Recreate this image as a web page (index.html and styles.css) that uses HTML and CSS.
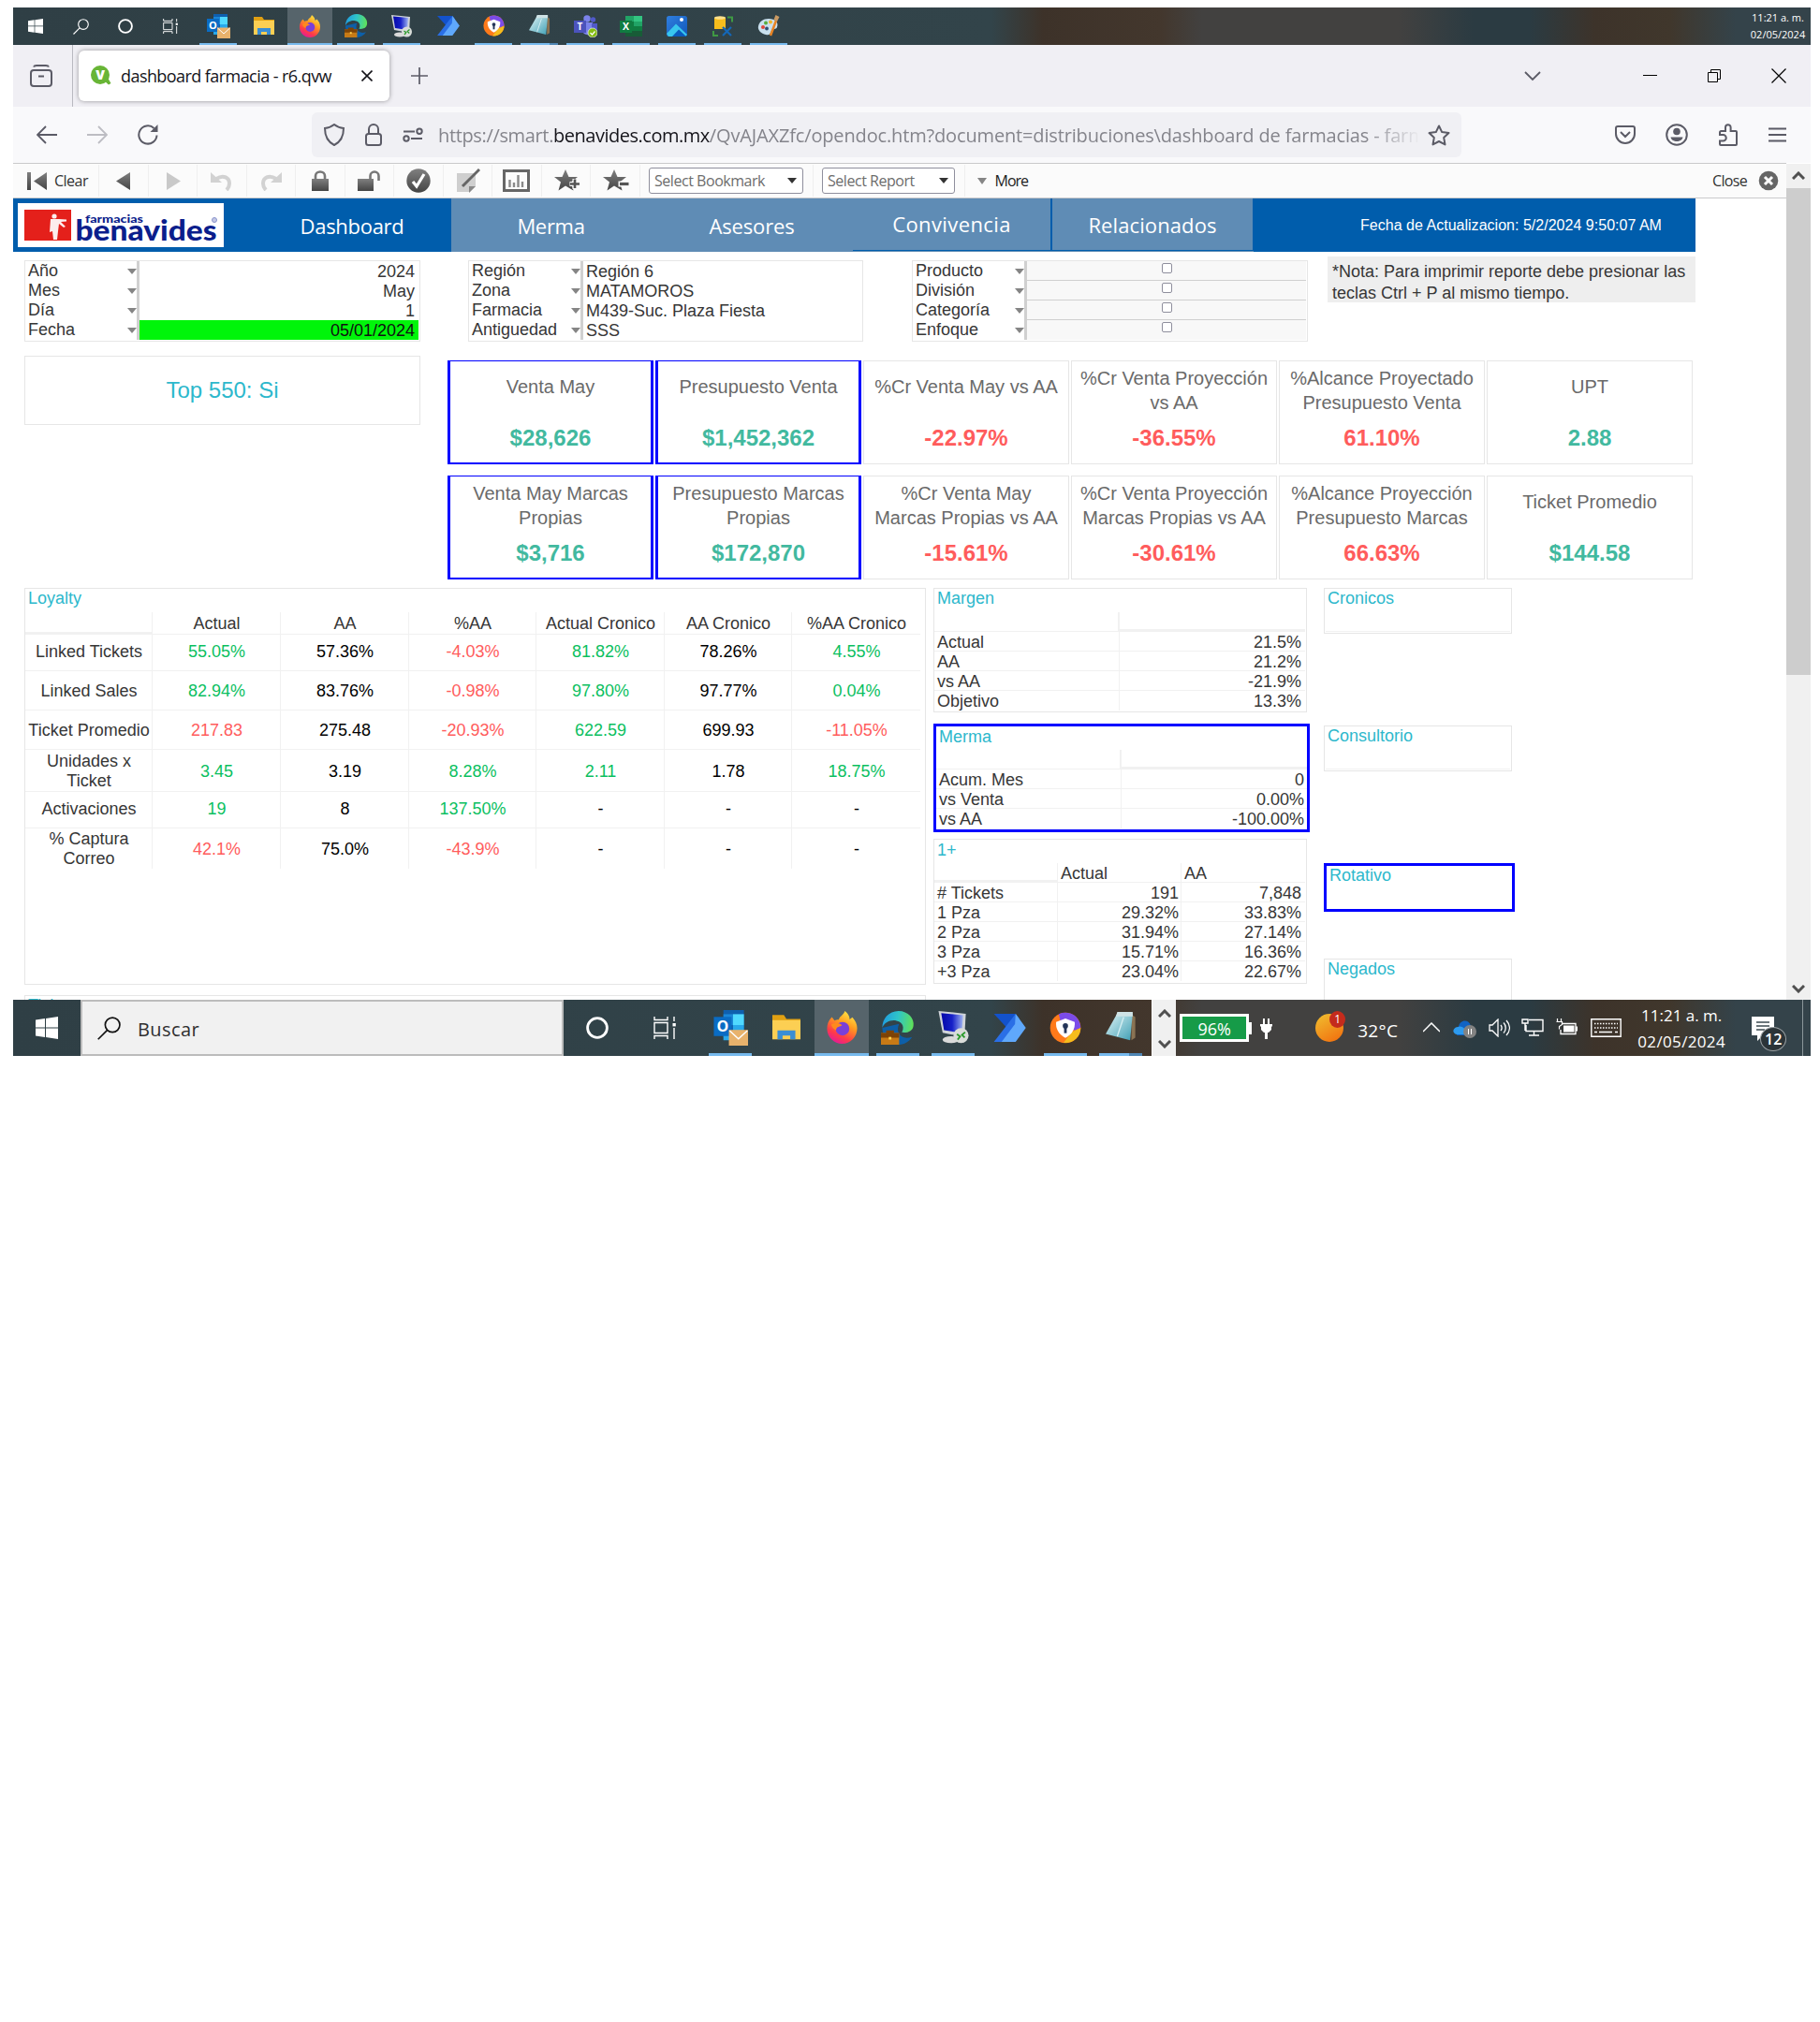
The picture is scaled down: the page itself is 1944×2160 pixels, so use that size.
FILE: index.html
```html
<!DOCTYPE html>
<html lang="es">
<head>
<meta charset="utf-8">
<title>dashboard farmacia - r6.qvw</title>
<link rel="stylesheet" href="styles.css">
</head>
<body>
<svg class="sprite" width="0" height="0" aria-hidden="true">
  <defs>
    <linearGradient id="ff" x1="0.8" y1="0" x2="0.3" y2="1"><stop offset="0" stop-color="#fff04a"/><stop offset=".4" stop-color="#ff9a1f"/><stop offset=".75" stop-color="#ff3b47"/><stop offset="1" stop-color="#e3189c"/></linearGradient>
    <linearGradient id="edge" x1="0" y1="0.3" x2="1" y2="0.4"><stop offset="0" stop-color="#1f9be0"/><stop offset=".5" stop-color="#2fc5c8"/><stop offset="1" stop-color="#5fe05a"/></linearGradient>
    <linearGradient id="scr" x1="0" y1="0" x2="1" y2="0"><stop offset="0" stop-color="#0508a8"/><stop offset=".5" stop-color="#1620c8"/><stop offset="1" stop-color="#9fb4f0"/></linearGradient>
    <linearGradient id="note" x1="0" y1="0" x2="1" y2="1"><stop offset="0" stop-color="#e2f5f7"/><stop offset="1" stop-color="#3f9fb4"/></linearGradient>
    <linearGradient id="gray" x1="0" y1="0" x2="0" y2="1"><stop offset="0" stop-color="#808080"/><stop offset="1" stop-color="#444"/></linearGradient>
    <linearGradient id="photo" x1="0" y1="0" x2="1" y2="1"><stop offset="0" stop-color="#2f7fe0"/><stop offset="1" stop-color="#1257b8"/></linearGradient>
  </defs>
  <symbol id="i-win" viewBox="0 0 24 24"><path fill="#fff" d="M0 3.4 10 2v9.4H0zM11 1.9 24 0v11.4H11zM0 12.5h10V22L0 20.6zM11 12.5h13V24l-13-1.9z"/></symbol>
  <symbol id="i-search" viewBox="0 0 24 24"><g fill="none" stroke="currentColor" stroke-width="1.6"><circle cx="15.5" cy="8.5" r="7.5"/><path d="M10 14 .7 23.3"/></g></symbol>
  <symbol id="i-circle" viewBox="0 0 24 24"><circle cx="12" cy="12" r="10.4" fill="none" stroke="#fff" stroke-width="2.8"/></symbol>
  <symbol id="i-task" viewBox="0 0 24 24"><g fill="none" stroke="#fff" stroke-width="1.4"><path d="M1 6.5h14v11H1zM1 0v3.5h14V0M1 24v-3.5h14V24M22 0v5M22 12v12"/></g><path fill="#fff" d="M20.5 7h3.3v3.4h-3.3z"/></symbol>
  <symbol id="i-outlook" viewBox="0 0 26 26"><path fill="#0f5fae" d="M8 0h15v20H8z"/><path fill="#1a86d8" d="M8 3h7v8H8z"/><path fill="#50d9ff" d="M15 3h8v8h-8z"/><path fill="#28a8ea" d="M8 17h15v5H8zM15 11h8v6h-8z"/><path fill="#0a6cc4" d="M1 5h13v14H1z"/><text x="7.5" y="16" text-anchor="middle" font-family="Open Sans, sans-serif" font-weight="700" font-size="11" fill="#fff">O</text><path fill="#e8b26c" d="M12 14.5h14V26H12z"/><path d="m12.5 15 6.5 6 6.5-6" fill="none" stroke="#fff"/></symbol>
  <symbol id="i-folder" viewBox="0 0 24 22"><path fill="#e0a012" d="M1 1h9l2 3h11v6H1z"/><path fill="#fccf53" d="M1 5h22v15H1z"/><path fill="#3a8ed4" d="M5 20v-7h14v7h-4v-3H9v3z"/></symbol>
  <symbol id="i-ff" viewBox="0 0 24 24"><path fill="url(#ff)" d="M4.5 4.5 6.500 7c1-.6 1.500-.7 3-.7 1-3 3.500-3 4.500-6.300 3 2.200 3.500 4.700 3.500 6.100l2-1.500c2.200 2.500 3.500 5 3.500 8.100C23 19 18 24 12 24S1 19 1 13c0-3.200 1-6 3.500-8.500z"/><circle cx="12.300" cy="13" r="5" fill="#7a3fd8"/><path fill="#ff8a1c" d="M4 10c3-2 5-1.500 8 .3-1.500 1.500-4 .7-4.500 3.700-1.500-.5-3-2-3.500-4z"/></symbol>
  <symbol id="i-edge" viewBox="0 0 26 26"><path fill="#0d5fa8" d="M24 20c-2.500 4-6.500 6-11 6C6 26 1 20 1 13l13-3c-3 6 1 13 10 10z"/><path fill="url(#edge)" d="M1 13C1 6 6 0 13.500 0S26 6 25 11.500c-.7 4-4 5.500-9 5 2-3 1.500-8-4-9C7 6.500 2.500 9 1 13z"/><path fill="#c77a16" d="M0 17h14v9H0z"/><path fill="#7d4306" d="M0 17h14v3.500H0zM4 15h6v2H4z"/><path fill="#ffd34d" d="M6 20h2v2H6z"/></symbol>
  <symbol id="i-remote" viewBox="0 0 24 24"><path fill="#cfd3d8" d="m1 0 20 2-1 17L4 16z"/><path fill="url(#scr)" d="m3 1.500 16 1.600-1 13L5 14z"/><ellipse cx="10" cy="21" rx="6" ry="2.500" fill="#dadada"/><circle cx="17.500" cy="18" r="5.500" fill="#d9dcd9"/><path d="m14.500 17 2.300 1.700-1.800 2.300M20.500 15.500l-2.300 2 2 2" fill="none" stroke="#2b9a2b" stroke-width="1.300"/></symbol>
  <symbol id="i-flow" viewBox="0 0 26 22"><path fill="#1352cc" d="M1 0h17l-6 12z"/><path fill="#2a6fe6" d="M1 22 18 0l3 4L9 22z"/><path fill="#5fa8fb" d="m18 0 8 11-8 11H7L17.500 8z"/></symbol>
  <symbol id="i-avast" viewBox="0 0 24 24"><circle cx="12" cy="12" r="11.500" fill="#ff7a1a"/><path fill="#7b4be8" d="M7 1.500C14-1.500 23 2 23.500 12L19 14 8 6z"/><path fill="#f5bd1c" d="M23.500 12c0 7-6 12-13 11.300L17 15z"/><path fill="#fff" d="m12 5 7 2.500c.5 5-2 9.500-7 12-5-2.500-7.500-7-7-12z"/><circle cx="12" cy="10.500" r="2" fill="#25365a"/><path fill="#25365a" d="M11 11h2v5h-2z"/></symbol>
  <symbol id="i-notepad" viewBox="0 0 24 24"><path fill="#8a7353" d="m20 2 3 2v16l-3 2z"/><path fill="url(#note)" d="M9 1h12l-2 21L0 17z"/><path fill="#cfe3e6" d="M9 0h12v3.500H8z"/><path d="M14 4 9 19" stroke="#d5eef2" stroke-width="1"/></symbol>
  <symbol id="i-teams" viewBox="0 0 26 24"><circle cx="15" cy="4" r="3.700" fill="#7b83eb"/><circle cx="21.500" cy="5" r="2.700" fill="#5059c9"/><path fill="#7b83eb" d="M10 8h11v11c-5 4-10 2-11-2z"/><path fill="#5059c9" d="M20 9h6v8c-1 3-5 3-6 1z"/><path fill="#4b53bc" d="M1 6h13v13H1z"/><text x="7.500" y="16" text-anchor="middle" font-family="Open Sans, sans-serif" font-weight="700" font-size="10" fill="#fff">T</text><circle cx="21" cy="19" r="5" fill="#84bd12" stroke="#eee" stroke-width=".7"/><path d="m18.500 19 2 2 3-3.500" fill="none" stroke="#fff" stroke-width="1.200"/></symbol>
  <symbol id="i-excel" viewBox="0 0 24 22"><path fill="#21a366" d="M6 0h18v22H6z"/><path fill="#33c481" d="M15 0h9v6h-9z"/><path fill="#185c37" d="M6 16h18v6H6z"/><path fill="#107c41" d="M6 6h9v10H6zM0 5h13v13H0zM15 11h9v5h-9z"/><text x="6.500" y="15.300" text-anchor="middle" font-family="Open Sans, sans-serif" font-weight="700" font-size="10.500" fill="#fff">X</text></symbol>
  <symbol id="i-photos" viewBox="0 0 22 22"><rect width="22" height="22" rx="2.500" fill="url(#photo)"/><path fill="#38c6ee" d="M0 19 10 8.500 22 20l-2 2H2z"/><path fill="#0a5bbd" d="m6 22 7-7.500 8 7.500z"/><circle cx="16" cy="4" r="2" fill="#fff"/></symbol>
  <symbol id="i-db" viewBox="0 0 22 22"><path fill="#f7bd1c" d="M2 2h12v12H2z"/><ellipse cx="8" cy="2" rx="6" ry="1.800" fill="#ffe08a"/><path d="M16 1.500h5v5M1 16v5h5" fill="none" stroke="#3f9a43" stroke-width="2"/><path d="m11 12 9 9M20 12l-9 9" stroke="#1467b8" stroke-width="2.200"/></symbol>
  <symbol id="i-paint" viewBox="0 0 24 24"><path fill="#c9e0ee" d="M12 4c7 0 11 4 9 9-1 3-5 1-6 4s-2 5-6 4C4 20 0 16 1 12c1-5 5-8 11-8z"/><circle cx="6" cy="13" r="2" fill="#e0453a"/><circle cx="9" cy="8.500" r="2" fill="#58ad3e"/><circle cx="14" cy="7.500" r="2" fill="#f0b42c"/><circle cx="10" cy="14.500" r="1.900" fill="#2f4f74"/><path d="m14 22 6-16" stroke="#e88424" stroke-width="2.500"/><path fill="#c99a63" d="m17.500 5 2-5 4 2-2.500 5z"/></symbol>
</svg>

<div class="screen">
  <div class="bar bar-top">
    <div class="start-cells">
      <span><svg width="16" height="16"><use href="#i-win"/></svg></span>
      <span><svg width="17" height="17"><use href="#i-search"/></svg></span>
      <span><svg width="16" height="16"><use href="#i-circle"/></svg></span>
      <span><svg width="16" height="16"><use href="#i-task"/></svg></span>
    </div>
    <div class="apps">
      <span class="on"><svg width="26" height="26"><use href="#i-outlook"/></svg></span>
      <span><svg width="24" height="22"><use href="#i-folder"/></svg></span>
      <span class="on focus"><svg width="24" height="24"><use href="#i-ff"/></svg></span>
      <span class="on"><svg width="25" height="25"><use href="#i-edge"/></svg></span>
      <span class="on"><svg width="24" height="24"><use href="#i-remote"/></svg></span>
      <span><svg width="25" height="21"><use href="#i-flow"/></svg></span>
      <span class="on"><svg width="23" height="23"><use href="#i-avast"/></svg></span>
      <span class="on multi"><svg width="23" height="23"><use href="#i-notepad"/></svg></span>
      <span class="on"><svg width="26" height="24"><use href="#i-teams"/></svg></span>
      <span class="on"><svg width="24" height="22"><use href="#i-excel"/></svg></span>
      <span class="on"><svg width="22" height="22"><use href="#i-photos"/></svg></span>
      <span class="on"><svg width="22" height="22"><use href="#i-db"/></svg></span>
      <span class="on"><svg width="24" height="24"><use href="#i-paint"/></svg></span>
    </div>
    <div class="mini-clock"><div>11:21 a. m.</div><div>02/05/2024</div></div>
  </div>

  <div class="tabs">
    <div class="fxview"><svg width="24" height="24" viewBox="0 0 24 24" fill="none" stroke="#5b5b66" stroke-width="2"><rect x="1" y="6" width="22" height="17" rx="3"/><path d="M4 2.500C4.500 1 5.500 1 7 1h10c1.500 0 2.500 0 3 1.500M9 12.500h6"/></svg></div>
    <div class="tab">
      <svg width="22" height="22" viewBox="0 0 22 22"><circle cx="10" cy="10" r="10" fill="#68b536"/><path fill="#68b536" d="m14 16 4-3 3.500 6-2.500 1.500z"/><text x="10" y="15" text-anchor="middle" font-family="Open Sans, sans-serif" font-weight="800" font-size="14" fill="#fff">V</text></svg>
      <span class="tab-title">dashboard farmacia - r6.qvw</span>
      <svg width="12" height="12" viewBox="0 0 12 12" stroke="#15141a" stroke-width="1.600"><path d="m.5.5 11 11M11.500.5l-11 11"/></svg>
    </div>
    <svg class="plus" width="18" height="18" viewBox="0 0 18 18" stroke="#5b5b66" stroke-width="1.700"><path d="M9 0v18M0 9h18"/></svg>
    <svg class="t-chev" width="18" height="11" viewBox="0 0 18 11" fill="none" stroke="#5b5b66" stroke-width="1.800"><path d="m1 1 8 8 8-8"/></svg>
    <svg class="t-min" width="15" height="16" viewBox="0 0 15 16" stroke="#000"><path d="M0 7.500h15"/></svg>
    <svg class="t-max" width="14" height="14" viewBox="0 0 14 14" fill="none" stroke="#000"><path d="M.5 3.500h10v10H.5zM3.500 3V.5h10v10H11"/></svg>
    <svg class="t-close" width="16" height="16" viewBox="0 0 16 16" stroke="#000" stroke-width="1.200"><path d="m.5.5 15 15M15.500.5l-15 15"/></svg>
  </div>

  <div class="nav">
    <svg class="n-back" width="22" height="20" viewBox="0 0 22 20" fill="none" stroke="#5b5b66" stroke-width="1.800"><path d="M22 10H1M10 1l-9 9 9 9"/></svg>
    <svg class="n-fwd" width="22" height="20" viewBox="0 0 22 20" fill="none" stroke="#bdbdc3" stroke-width="1.800"><path d="M0 10h21M12 1l9 9-9 9"/></svg>
    <svg class="n-rel" width="22" height="22" viewBox="0 0 22 22"><path d="M20.500 11.500A9.600 9.600 0 1 1 17.500 4" fill="none" stroke="#5b5b66" stroke-width="2"/><path fill="#5b5b66" d="M21.500 0v8h-8z"/></svg>
    <div class="url">
      <svg width="22" height="24" viewBox="0 0 22 24" fill="none" stroke="#5b5b66" stroke-width="2"><path d="M11 1c3 2.500 6 3.500 10 4 0 8-2 14-10 18C3 19 1 13 1 5c4-.5 7-1.500 10-4z"/></svg>
      <svg class="u-lock" width="18" height="24" viewBox="0 0 18 24" fill="none" stroke="#5b5b66" stroke-width="2"><rect x="1" y="11" width="16" height="12" rx="2.500"/><path d="M4 11V6a5 5 0 0 1 10 0v5"/></svg>
      <svg class="u-perm" width="22" height="16" viewBox="0 0 22 16" fill="none" stroke="#5b5b66" stroke-width="2"><path d="M1 4.500h12M9 12h12"/><circle cx="18" cy="4.300" r="2.700"/><circle cx="4" cy="12" r="2.700"/></svg>
      <div class="u-text"><span class="scheme">https://smart.</span><span class="host">benavides.com.mx</span><span class="path">/QvAJAXZfc/opendoc.htm?document=distribuciones\dashboard de farmacias - farm</span></div>
      <svg class="u-star" width="24" height="23" viewBox="0 0 24 23" fill="none" stroke="#5b5b66" stroke-width="2" stroke-linejoin="round"><path d="m12 1.500 3.200 6.600 7.300 1-5.300 5 1.300 7.300L12 18l-6.500 3.400 1.300-7.300-5.300-5 7.300-1z"/></svg>
    </div>
    <svg class="n-pocket" width="22" height="20" viewBox="0 0 22 20" fill="none" stroke="#5b5b66" stroke-width="2"><path d="M1 3a2 2 0 0 1 2-2h16a2 2 0 0 1 2 2v6a10 10 0 0 1-20 0zM6 7l5 5 5-5"/></svg>
    <svg class="n-acc" width="24" height="24" viewBox="0 0 24 24"><circle cx="12" cy="12" r="10.800" fill="none" stroke="#5b5b66" stroke-width="2"/><circle cx="12" cy="8.500" r="3.800" fill="#5b5b66"/><path fill="#5b5b66" d="M5.500 14.500h13C18 17.500 15 19 12 19s-6-1.500-6.500-4.500z"/></svg>
    <svg class="n-ext" width="21" height="24" viewBox="0 0 21 24" fill="none" stroke="#5b5b66" stroke-width="2"><path d="M2 12V9.500A1.500 1.500 0 0 1 3.500 8H8V4a2.800 2.800 0 0 1 5.600 0v4h5.400a1 1 0 0 1 1 1v13a1 1 0 0 1-1 1H3a1 1 0 0 1-1-1v-3.500h3.500a2.800 2.800 0 0 0 0-6.500z"/></svg>
    <svg class="n-menu" width="19" height="16" viewBox="0 0 19 16" stroke="#5b5b66" stroke-width="1.800"><path d="M0 1.500h19M0 8h19M0 14.500h19"/></svg>
  </div>

  <div class="view">
    <div class="doc">
      <div class="toolbar">
        <span class="tc first"><svg width="22" height="19" viewBox="0 0 22 19" fill="url(#gray)"><path d="M1 0h4v19H1zM22 0v19L8 9.500z"/></svg><span>Clear</span></span>
        <span class="tc"><svg width="15" height="19" viewBox="0 0 15 19"><path fill="url(#gray)" d="M15 0v19L0 9.500z"/></svg></span>
        <span class="tc"><svg class="nudge" width="15" height="19" viewBox="0 0 15 19"><path fill="#c9c9c9" d="M0 0v19l15-9.500z"/></svg></span>
        <span class="tc"><svg width="23" height="21" viewBox="0 0 23 21"><path d="M6 8c8-5 14-1 14 5 0 3-1 5-3 7" fill="none" stroke="#d2d2d2" stroke-width="4"/><path fill="#d2d2d2" d="M0 1v11h12z"/></svg></span>
        <span class="tc"><svg width="23" height="21" viewBox="0 0 23 21"><path d="M17 8C9 3 3 7 3 13c0 3 1 5 3 7" fill="none" stroke="#d2d2d2" stroke-width="4"/><path fill="#d2d2d2" d="M23 1v11H11z"/></svg></span>
        <span class="tc"><svg width="18" height="22" viewBox="0 0 18 22"><path fill="url(#gray)" d="M0 9h18v13H0z"/><path d="M4 10V6a5 4.500 0 0 1 10 0v4" fill="none" stroke="#777" stroke-width="2.600"/></svg></span>
        <span class="tc"><svg width="24" height="22" viewBox="0 0 24 22"><path fill="url(#gray)" d="M0 9h17v13H0z"/><path d="M13.500 10V6a4.500 4.500 0 0 1 9 0v5" fill="none" stroke="#777" stroke-width="2.600"/></svg></span>
        <span class="tc"><svg width="26" height="26" viewBox="0 0 26 26"><circle cx="13" cy="13" r="12.700" fill="url(#gray)"/><path d="m7 14 4 5 8-13" fill="none" stroke="#fff" stroke-width="3.200"/></svg></span>
        <span class="tc"><svg class="nudge" width="25" height="26" viewBox="0 0 25 26"><path fill="#cfcfcf" d="M0 5h20v14l-6 6H0z"/><path fill="#888" d="M13 19h7l-7 7z"/><path d="M24 1 6 19" stroke="#666" stroke-width="3"/></svg></span>
        <span class="tc"><svg width="29" height="24" viewBox="0 0 29 24"><path d="M1.500 1.500h26v21h-26z" fill="none" stroke="#666" stroke-width="3"/><path d="M7.500 19v-8M12 19v-5M16.500 19V6M21 19v-6" stroke="#8a8a8a" stroke-width="2.400"/></svg></span>
        <span class="tc"><svg class="nudge" width="28" height="24" viewBox="0 0 28 24"><path fill="url(#gray)" d="m12 0 3.500 8H25l-7 5.500 2.500 9L12 17.500 4.500 22.500 7 13.500 0 8h8.500z"/><path d="M22 10v11M16.500 15.500h11" stroke="#fbfbfb" stroke-width="5"/><path d="M22 10.500v9.500M17 15.500h10" stroke="#555" stroke-width="2.600"/></svg></span>
        <span class="tc"><svg class="nudge" width="28" height="24" viewBox="0 0 28 24"><path fill="url(#gray)" d="m12 0 3.500 8H25l-7 5.500 2.500 9L12 17.500 4.500 22.500 7 13.500 0 8h8.500z"/><path d="M16.500 15.500h11" stroke="#fbfbfb" stroke-width="6"/><path d="M18 15.500h9.500" stroke="#555" stroke-width="3.200"/></svg></span>
        <span class="tc bk"><span class="sel"><span>Select Bookmark</span><i class="dd"></i></span></span>
        <span class="tc rp"><span class="sel"><span>Select Report</span><i class="dd"></i></span></span>
        <span class="more"><i class="dd soft"></i><span>More</span></span>
        <span class="close"><span>Close</span><svg width="22" height="22" viewBox="0 0 22 22"><circle cx="11" cy="11" r="10.300" fill="#666"/><path d="m7 7 8 8M15 7l-8 8" stroke="#fff" stroke-width="3"/></svg></span>
      </div>

      <div class="sheet">
        <header class="head">
          <div class="logo">
            <svg width="220" height="47" viewBox="0 0 220 47"><path fill="#e4201b" d="M7 7h50v33H7z"/><g fill="#fff" opacity=".92"><circle cx="39" cy="14" r="2.600"/><path d="M35 17h9l8 .5v2l-6 .5 5 5-2 1-5-4-1 8-1 9h-4l-1-9-3 1z"/></g><text x="61.500" y="39.500" textLength="151" lengthAdjust="spacingAndGlyphs" font-family="Lato, sans-serif" font-weight="900" font-size="31" fill="#0b1e8c">benavides</text><text x="72" y="21" textLength="62" lengthAdjust="spacingAndGlyphs" font-family="Lato, sans-serif" font-weight="900" font-size="12" fill="#0b1e8c">farmacias</text><circle cx="210" cy="18" r="2.500" fill="#c3c8e6" stroke="#8a94cc"/></svg>
          </div>
          <div class="htab active">Dashboard</div>
          <div class="htab t2">Merma</div>
          <div class="htab t3">Asesores</div>
          <div class="htab t4">Convivencia</div>
          <div class="htab t5">Relacionados</div>
          <div class="updated">Fecha de Actualizacion: 5/2/2024 9:50:07 AM</div>
        </header>

        <section class="filters">
          <div class="filter f1">
            <div class="fr"><span>Año</span><i class="dd soft"></i><em>2024</em></div>
            <div class="fr"><span>Mes</span><i class="dd soft"></i><em>May</em></div>
            <div class="fr"><span>Día</span><i class="dd soft"></i><em>1</em></div>
            <div class="fr picked"><span>Fecha</span><i class="dd soft"></i><em>05/01/2024</em></div>
          </div>
          <div class="filter f2">
            <div class="fr"><span>Región</span><i class="dd soft"></i><em>Región 6</em></div>
            <div class="fr"><span>Zona</span><i class="dd soft"></i><em>MATAMOROS</em></div>
            <div class="fr"><span>Farmacia</span><i class="dd soft"></i><em>M439-Suc. Plaza Fiesta</em></div>
            <div class="fr"><span>Antiguedad</span><i class="dd soft"></i><em>SSS</em></div>
          </div>
          <div class="filter f3">
            <div class="fr"><span>Producto</span><i class="dd soft"></i><em><u></u></em></div>
            <div class="fr"><span>División</span><i class="dd soft"></i><em><u></u></em></div>
            <div class="fr"><span>Categoría</span><i class="dd soft"></i><em><u></u></em></div>
            <div class="fr"><span>Enfoque</span><i class="dd soft"></i><em><u></u></em></div>
          </div>
          <div class="hint">*Nota: Para imprimir reporte debe presionar las<br>teclas Ctrl + P al mismo tiempo.</div>
        </section>

        <section class="summary">
          <div class="top550">Top 550: Si</div>
          <div class="kpis">
            <div class="kpi hot one"><h3>Venta May</h3><p class="good">$28,626</p></div>
            <div class="kpi hot one"><h3>Presupuesto Venta</h3><p class="good">$1,452,362</p></div>
            <div class="kpi one"><h3>%Cr Venta May vs AA</h3><p class="bad">-22.97%</p></div>
            <div class="kpi"><h3>%Cr Venta Proyección<br>vs AA</h3><p class="bad">-36.55%</p></div>
            <div class="kpi"><h3>%Alcance Proyectado<br>Presupuesto Venta</h3><p class="bad">61.10%</p></div>
            <div class="kpi one"><h3>UPT</h3><p class="good">2.88</p></div>
            <div class="kpi hot"><h3>Venta May Marcas<br>Propias</h3><p class="good">$3,716</p></div>
            <div class="kpi hot"><h3>Presupuesto Marcas<br>Propias</h3><p class="good">$172,870</p></div>
            <div class="kpi"><h3>%Cr Venta May<br>Marcas Propias vs AA</h3><p class="bad">-15.61%</p></div>
            <div class="kpi"><h3>%Cr Venta Proyección<br>Marcas Propias vs AA</h3><p class="bad">-30.61%</p></div>
            <div class="kpi"><h3>%Alcance Proyección<br>Presupuesto Marcas</h3><p class="bad">66.63%</p></div>
            <div class="kpi one"><h3>Ticket Promedio</h3><p class="good">$144.58</p></div>
          </div>
        </section>

        <section class="panels">
          <div class="col-a">
            <div class="panel loyalty">
              <h2>Loyalty</h2>
              <div class="lg lhead"><span></span><span>Actual</span><span>AA</span><span>%AA</span><span>Actual Cronico</span><span>AA Cronico</span><span>%AA Cronico</span></div>
              <div class="lg"><span>Linked Tickets</span><span class="g">55.05%</span><span class="k">57.36%</span><span class="r">-4.03%</span><span class="g">81.82%</span><span class="k">78.26%</span><span class="g">4.55%</span></div>
              <div class="lg"><span>Linked Sales</span><span class="g">82.94%</span><span class="k">83.76%</span><span class="r">-0.98%</span><span class="g">97.80%</span><span class="k">97.77%</span><span class="g">0.04%</span></div>
              <div class="lg"><span>Ticket Promedio</span><span class="r">217.83</span><span class="k">275.48</span><span class="r">-20.93%</span><span class="g">622.59</span><span class="k">699.93</span><span class="r">-11.05%</span></div>
              <div class="lg"><span>Unidades x<br>Ticket</span><span class="g">3.45</span><span class="k">3.19</span><span class="g">8.28%</span><span class="g">2.11</span><span class="k">1.78</span><span class="g">18.75%</span></div>
              <div class="lg"><span>Activaciones</span><span class="g">19</span><span class="k">8</span><span class="g">137.50%</span><span class="k">-</span><span class="k">-</span><span class="k">-</span></div>
              <div class="lg last"><span>% Captura<br>Correo</span><span class="r">42.1%</span><span class="k">75.0%</span><span class="r">-43.9%</span><span class="k">-</span><span class="k">-</span><span class="k">-</span></div>
            </div>
            <div class="panel tickets"><h2>Tickets</h2></div>
          </div>
          <div class="col-b">
            <div class="panel margen">
              <h2>Margen</h2>
              <div class="r2 rh"><span></span><span></span></div>
              <div class="r2"><span>Actual</span><span>21.5%</span></div>
              <div class="r2"><span>AA</span><span>21.2%</span></div>
              <div class="r2"><span>vs AA</span><span>-21.9%</span></div>
              <div class="r2 last"><span>Objetivo</span><span>13.3%</span></div>
            </div>
            <div class="panel merma blue">
              <h2>Merma</h2>
              <div class="r2 rh"><span></span><span></span></div>
              <div class="r2"><span>Acum. Mes</span><span>0</span></div>
              <div class="r2"><span>vs Venta</span><span>0.00%</span></div>
              <div class="r2 last"><span>vs AA</span><span>-100.00%</span></div>
            </div>
            <div class="panel plus1">
              <h2>1+</h2>
              <div class="r3 rh"><span></span><span>Actual</span><span>AA</span></div>
              <div class="r3"><span># Tickets</span><span>191</span><span>7,848</span></div>
              <div class="r3"><span>1 Pza</span><span>29.32%</span><span>33.83%</span></div>
              <div class="r3"><span>2 Pza</span><span>31.94%</span><span>27.14%</span></div>
              <div class="r3"><span>3 Pza</span><span>15.71%</span><span>16.36%</span></div>
              <div class="r3 last"><span>+3 Pza</span><span>23.04%</span><span>22.67%</span></div>
            </div>
          </div>
          <div class="col-c">
            <div class="panel small"><h2>Cronicos</h2></div>
            <div class="panel small s2"><h2>Consultorio</h2></div>
            <div class="panel small s3 blue"><h2>Rotativo</h2></div>
            <div class="panel small s4"><h2>Negados</h2></div>
          </div>
        </section>
      </div>
    </div>
    <div class="scroll">
      <div class="sbtn"><svg width="14" height="9" viewBox="0 0 14 9" fill="none" stroke="#505050" stroke-width="3"><path d="m1 8 6-6 6 6"/></svg></div>
      <div class="thumb"></div>
      <div class="sbtn end"><svg width="14" height="9" viewBox="0 0 14 9" fill="none" stroke="#505050" stroke-width="3"><path d="m1 1 6 6 6-6"/></svg></div>
    </div>
  </div>

  <div class="bar bar-bottom">
    <div class="win"><svg width="24" height="24"><use href="#i-win"/></svg></div>
    <div class="find"><svg width="25" height="25"><use href="#i-search"/></svg><span>Buscar</span></div>
    <div class="two"><span><svg width="24" height="24"><use href="#i-circle"/></svg></span><span><svg width="24" height="24"><use href="#i-task"/></svg></span></div>
    <div class="apps big">
      <span class="on"><svg width="40" height="38"><use href="#i-outlook"/></svg></span>
      <span><svg width="34" height="30"><use href="#i-folder"/></svg></span>
      <span class="on focus"><svg width="35" height="35"><use href="#i-ff"/></svg></span>
      <span class="on"><svg width="36" height="36"><use href="#i-edge"/></svg></span>
      <span class="on"><svg width="35" height="35"><use href="#i-remote"/></svg></span>
      <span><svg width="36" height="30"><use href="#i-flow"/></svg></span>
      <span class="on"><svg width="34" height="34"><use href="#i-avast"/></svg></span>
      <span class="on multi"><svg width="33" height="33"><use href="#i-notepad"/></svg></span>
    </div>
    <div class="spin"><svg width="14" height="9" viewBox="0 0 14 9" fill="none" stroke="#505050" stroke-width="3"><path d="m1 8 6-6 6 6"/></svg><svg width="14" height="9" viewBox="0 0 14 9" fill="none" stroke="#505050" stroke-width="3"><path d="m1 1 6 6 6-6"/></svg></div>
    <div class="battery">96%</div><div class="nub"></div>
    <svg class="plug" width="13" height="22" viewBox="0 0 13 22" fill="#fff"><path d="M3 0h2v6H3zM8 0h2v6H8zM0 6h13v2l-1 1v3l-3 3H8v7H5v-7H4l-3-3V9L0 8z"/></svg>
    <div class="weather"><i>1</i></div>
    <div class="temp">32°C</div>
    <svg class="up" width="18" height="11" viewBox="0 0 18 11" fill="none" stroke="#fff" stroke-width="1.500"><path d="m0 10 9-9 9 9"/></svg>
    <svg class="cloud" width="26" height="20" viewBox="0 0 26 20"><path fill="#1163c4" d="M6 8c1-8 11-9 13-1l4 5-6 5H4z"/><path fill="#2d9bf0" d="M5 8c4-2 7 1 14 8H4c-5-1-5-7 1-8z"/><ellipse cx="18" cy="13" rx="7" ry="7" fill="#828282"/><path d="M16.500 10v6M19.500 10v6" stroke="#fff"/></svg>
    <svg class="spk" width="23" height="20" viewBox="0 0 23 20" fill="none" stroke="#fff" stroke-width="1.300"><path d="M1 7h3l6-6v18l-6-6H1zM13 7c1.500 2 1.500 4 0 6M16 4.500c3 3 3 8 0 11M19 2c4.500 5 4.500 11 0 16"/></svg>
    <svg class="mon" width="24" height="19" viewBox="0 0 24 19" fill="none" stroke="#fff" stroke-width="1.400"><path d="M8 1.500h15v12H5V7M13.500 14v4M8 18h11M1 1h6v4H1zM4 5v8"/></svg>
    <svg class="bat" width="23" height="18" viewBox="0 0 23 18"><path d="M6 5.500h15v11H5V12" fill="none" stroke="#fff" stroke-width="1.300"/><path fill="#fff" d="M8 7.500h11.500v7H8zM21 8.500h2v5h-2z"/><path d="M1.500 0v3M5.500 0v3M.5 3.500h6v3l-3 2v3" fill="none" stroke="#fff" stroke-width="1.200"/></svg>
    <svg class="kbd" width="33" height="20" viewBox="0 0 33 20" fill="none" stroke="#fff" stroke-width="1.400"><path d="M.8.800h31.400v18.400H.8z"/><path d="M4 5.500h25M4 10h25" stroke-dasharray="1.500 1.500"/><path d="M4 14.500h3M9 14.500h14M26 14.500h3"/></svg>
    <div class="clock"><div>11:21 a. m.</div><div class="date">02/05/2024</div></div>
    <div class="notif"><svg width="25" height="27" viewBox="0 0 25 27"><path fill="#fff" d="M0 0h24v20H12l-6 6v-6H0z"/><path d="M5 6h14M5 10h14M5 14h9" stroke="#3b4a50" stroke-width="1.400"/></svg><i>12</i></div>
    <div class="peek"></div>
  </div>
</div>
</body>
</html>
```
FILE: styles.css
```css
* { box-sizing: border-box; }
body { margin: 0; background: #fff; font-family: "Liberation Sans", Arial, sans-serif; font-size: 18px; line-height: 21px; color: #363636; }
h2, h3, p { margin: 0; font-weight: 400; }
i, em { font-style: normal; }
svg { display: block; flex: none; }
.sprite { position: absolute; }
.screen { width: 1920px; margin: 8px 0 0 14px; }

/* Windows bars */
.bar { display: flex; color: #fff; font-family: "Open Sans", "Noto Sans", sans-serif; background: linear-gradient(90deg, #2f3f45 0, #32444a 1045px, #3d3229 1100px, #43372d 1225px, #424140 1270px, #424140 1480px, #2b3b42 1560px, #2b3b42 1620px, #3d332a 1690px, #40372c 1770px, #34434a 1840px, #34434a 1920px); }
.bar-top { height: 40px; }
.start-cells { display: flex; margin-right: 3px; }
.start-cells span { width: 48px; display: grid; place-items: center; }
.apps { display: flex; gap: 1px; }
.apps span { width: 48px; height: 40px; display: flex; align-items: center; justify-content: center; padding-bottom: 1px; background: no-repeat center bottom / 40px 2px; }
.apps .on { background-image: linear-gradient(#76b9ed, #76b9ed); }
.apps .multi { background-image: linear-gradient(90deg, #76b9ed 31px, #4f86b4 31px); }
.apps .focus { background-color: #56646b; background-size: 100% 2px; }
.mini-clock { margin-left: auto; width: 74px; text-align: center; font-size: 11px; line-height: 18px; padding: 2px 0 0 4px; }

/* Browser tabs */
.tabs { display: flex; height: 66px; background: #f0eff4; }
.tabs > svg { align-self: center; }
.fxview { width: 64px; border-right: 1px solid #b9b9c0; padding: 21px 0 0 18px; }
.tab { width: 332px; height: 54px; margin: 6px 0 0 6px; padding-left: 13px; border-radius: 6px; background: #fff; box-shadow: 0 0 5px rgba(0,0,0,.38); display: flex; align-items: center; font: 18px/24px "Open Sans", "Noto Sans", sans-serif; color: #15141a; }
.tab-title { flex: none; width: 267px; padding-left: 10px; letter-spacing: -.565px; white-space: nowrap; }
.plus { margin-left: 23px; }
.t-chev { margin-left: 1171px; }
.t-min { margin-left: 109px; }
.t-max { margin-left: 54px; }
.t-close { margin-left: 54px; }

/* Address row */
.nav { display: flex; align-items: center; height: 60px; padding-left: 25px; background: #f9f9fb; }
.n-fwd { margin-left: 32px; }
.n-rel { margin-left: 32px; }
.url { display: flex; align-items: center; width: 1228px; height: 48px; margin-left: 164px; padding-left: 13px; border-radius: 6px; background: #f0f0f4; }
.u-lock { margin-left: 22px; }
.u-perm { margin-left: 22px; }
.u-text { width: 1046px; margin-left: 16px; padding-top: 2px; overflow: hidden; white-space: nowrap; font: 20px/30px "Open Sans", "Noto Sans", sans-serif; color: #84848b; -webkit-mask-image: linear-gradient(90deg, #000 990px, transparent 1050px); mask-image: linear-gradient(90deg, #000 990px, transparent 1050px); }
.scheme { letter-spacing: -.35px; }
.host { color: #15141a; letter-spacing: -.48px; }
.path { letter-spacing: -.15px; }
.u-star { margin-left: 11px; }
.n-pocket { margin-left: 164px; }
.n-acc { margin-left: 32px; }
.n-ext { margin-left: 32px; }
.n-menu { margin-left: 33px; }

.view { display: flex; height: 894px; }
.doc { width: 1894px; }
.scroll { width: 26px; margin-top: 1px; background: #f0f0f0; display: flex; flex-direction: column; }
.sbtn { height: 26px; display: flex; align-items: center; justify-content: center; padding-bottom: 2px; }
.sbtn.end { margin-top: auto; padding: 2px 0 0; }
.thumb { height: 520px; background: #cdcdcd; }

/* QlikView toolbar */
.toolbar { display: flex; height: 38px; background: #fbfbfb; border: solid #c9c9cb; border-width: 1px 0; font: 16px/22px "Open Sans", "Noto Sans", sans-serif; letter-spacing: -.46px; color: #333; padding-top: 1px; }
.tc { width: 52.5px; height: 34px; display: flex; align-items: center; justify-content: center; border-right: 1px solid #efefef; }
.tc.first { width: 92px; gap: 8px; padding-left: 3px; }
.nudge { margin-left: 3px; }
.tc.bk { width: 185px; }
.tc.rp { width: 162px; }
.sel { display: flex; align-items: center; justify-content: space-between; width: 165px; height: 28px; padding: 0 6px 0 5px; border: 1px solid #8f8f9d; border-radius: 3px; background: #fff; color: #6d6d6d; }
.rp .sel { width: 142px; }
.dd { width: 0; height: 0; border: solid transparent; border-width: 6px 5.5px 0; border-top-color: #333; }
.dd.soft { border-width: 6px 5px 0; border-top-color: #858585; }
.more { display: flex; align-items: center; gap: 9px; margin-left: 13px; height: 34px; color: #222; letter-spacing: -1px; }
.more .dd { border-width: 7px 5px 0; }
.close { display: flex; align-items: center; gap: 12px; margin: 0 8px 0 auto; height: 34px; letter-spacing: -.67px; }

/* Sheet */
.sheet { height: 856px; overflow: hidden; }
.head { display: flex; width: 1797px; height: 57px; background: #005dac; color: #fff; font-family: "Open Sans", "Noto Sans", sans-serif; font-size: 22px; font-weight: 500; line-height: 30px; }
.logo { width: 220px; height: 47px; margin: 5px 31px 0 5px; background: #fff; }
.htab { width: 213px; text-align: center; padding-top: 14px; background: #5f8cb5; letter-spacing: -.3px; }
.htab.active { width: 212px; background: none; }
.htab.t3 { width: 216px; letter-spacing: -.15px; }
.htab.t4 { width: 212px; height: 56px; padding-top: 12px; border: solid #005dac; border-width: 0 1px 1px 0; box-shadow: 0 1px #5f8cb5; letter-spacing: .4px; }
.htab.t5 { width: 216px; height: 56px; padding-top: 13px; border: solid #005dac; border-width: 0 1px 1px 1px; box-shadow: 0 1px #5f8cb5; letter-spacing: .1px; }
.updated { margin-left: 114px; font: 16px/30px "Liberation Sans", Arial, sans-serif; letter-spacing: .02px; padding-top: 14px; }

.filters { display: flex; align-items: flex-start; height: 91px; margin: 5px 0 0 12px; }
.filter { width: 423px; height: 87px; margin-top: 4px; border: 1px solid #e6e6e6; }
.f2 { width: 422px; margin-left: 51px; }
.f3 { margin-left: 52px; }
.fr { display: flex; align-items: center; height: 21px; padding-right: 1px; line-height: 23px; }
.fr span { width: 109px; padding-left: 3px; }
.fr em { flex: 1; height: 21px; border-left: 3px solid #d0d0d0; text-align: right; padding-right: 4px; }
.picked em { background: #00f50a; color: #111; }
.f2 em { text-align: left; padding-left: 3px; }
.f3 em { background: #f8f8f8; border-bottom: 1px solid #d0d0d0; padding: 2px 0 0; display: flex; justify-content: center; }
.f3 .fr:last-child em { border-bottom: 0; }
.f3 u { width: 11px; height: 11px; border: 1px solid #8f8f9d; border-radius: 2px; background: #fff; }
.hint { width: 393px; height: 49px; margin-left: 21px; padding: 5px 0 0 5px; background: #eee; line-height: 23px; white-space: nowrap; }

.summary { display: flex; align-items: flex-start; margin: 15px 0 0 12px; }
.top550 { width: 423px; height: 74px; border: 1px solid #e6e6e6; text-align: center; font-size: 24px; line-height: 72px; color: #2db8cc; }
.kpis { display: grid; grid-template-columns: repeat(6, 220px); grid-auto-rows: 111px; gap: 12px 2px; margin: 5px 0 0 29px; }
.kpi { border: 1px solid #e6e6e6; text-align: center; }
.kpi.hot { border-color: #00f; border-width: 1px 3px 2px; }
.kpi h3 { height: 68px; padding-top: 5px; font-size: 20px; line-height: 26px; color: #6a6a6a; white-space: nowrap; }
.kpi.one h3 { padding-top: 14px; }
.kpi p { font-size: 24px; line-height: 28px; font-weight: 700; }
.good { color: #42b99f; }
.bad { color: #ff5c5c; }

.panels { display: flex; align-items: flex-start; margin: 9px 0 0 12px; }
.col-a { width: 963px; }
.col-b { width: 402px; margin-left: 8px; }
.col-c { width: 204px; margin-left: 15px; }
.panel { border: 1px solid #e6e6e6; background: #fff; overflow: hidden; }
.panel h2 { height: 25px; font-size: 18px; line-height: 21px; color: #2db8cc; padding-left: 3px; }
.blue { border: 3px solid #00f; }
.loyalty { height: 424px; }
.tickets { height: 100px; margin-top: 11px; }
.lg { display: grid; grid-template-columns: 136px 137px 137px 136px 137px 136px 137px; width: 956px; height: 42px; }
.lg span { display: flex; align-items: center; justify-content: center; text-align: center; border: solid #f1f1f1; border-width: 0 1px 1px 0; padding: 2px 0 0 1px; white-space: nowrap; }
.lg span:last-child { border-right: 0; }
.lg.last span { border-bottom: 0; padding-top: 1px; }
.lhead { height: 21px; }
.lhead span:first-child { border-bottom-width: 3px; }
.g { color: #0bbf5f; }
.r { color: #ff5c5c; }
.k { color: #000; }

.col-b .panel { width: 399px; }
.r2, .r3 { display: grid; grid-template-columns: 198px 1fr; height: 21px; padding-right: 1px; }
.r3 { grid-template-columns: 132px 132px 1fr; }
.r2 span, .r3 span { border-bottom: 1px solid #f1f1f1; padding: 0 4px 0 3px; text-align: right; height: 21px; line-height: 22px; }
.r3 span:nth-child(2) { padding-right: 2px; }
.r2 span:first-child, .r3 span:not(:last-child) { border-right: 1px solid #f1f1f1; }
.r2 span:first-child, .r3 span:first-child { text-align: left; }
.r2.last span, .r3.last span { border-bottom: 0; }
.r2.rh span:first-child { border-right-width: 2px; }
.r2.rh span:last-child { border-bottom-width: 3px; }
.r3.rh span { text-align: left; }
.r3.rh span:first-child { border-bottom-width: 3px; }
.margen { height: 133px; }
.col-b .merma { width: 402px; height: 116px; margin-top: 12px; }
.merma h2, .plus1 h2 { line-height: 23px; }
.merma .r2 { padding-right: 0; }
.merma .r2 span { padding: 0 3px; }
.plus1 { height: 155px; margin-top: 7px; }
.small { width: 201px; height: 49px; }
.small::after { content: ""; display: block; height: 1px; margin: 20px 1px 0; background: #f1f1f1; }
.s2 { margin-top: 98px; }
.s3 { width: 204px; height: 52px; margin-top: 98px; }
.s3::after { display: none; }
.s4 { height: 60px; margin-top: 50px; }

/* Bottom bar */
.bar-bottom { height: 60px; }
.win { width: 72px; display: grid; place-items: center; }
.find { width: 516px; display: flex; align-items: center; padding-left: 16px; border: 2px solid #bcbcbc; background: #f1f1f1; color: #111; font-size: 20px; }
.find span { margin-left: 18px; color: #2f2f2f; padding-top: 3px; letter-spacing: .4px; }
.two { display: flex; margin-right: 5px; }
.two span { width: 72px; display: grid; place-items: center; }
.apps.big { gap: 1.6px; }
.apps.big span { width: 58px; height: 60px; background-size: 46px 3px; }
.apps.big .multi { background-image: linear-gradient(90deg, #76b9ed 32px, #4f86b4 32px); }
.apps.big .focus { background-size: 100% 3px; }
.spin { width: 26px; margin-left: 4px; background: #f0f0f0; border-left: 1px solid #fff; display: flex; flex-direction: column; justify-content: space-between; align-items: center; padding: 10px 0 8px; }
.battery { width: 74px; height: 30px; margin: 15px 0 0 4px; border: 3px solid #fff; background: #169b48; text-align: center; font-size: 18px; line-height: 26px; }
.nub { width: 3px; height: 13px; margin-top: 24px; background: #fff; }
.plug { margin: 20px 0 0 9px; }
.weather { position: relative; width: 30px; height: 30px; margin: 15px 0 0 46px; border-radius: 50%; background: linear-gradient(150deg, #f0c030, #f26a0c); }
.weather i { position: absolute; left: 15px; top: -3px; width: 17px; height: 18px; border-radius: 50%; background: #c42b1c; font-size: 12px; line-height: 18px; text-align: center; }
.temp { width: 44px; margin: 20px 0 0 15px; font-size: 19px; line-height: 26px; letter-spacing: .29px; }
.up { margin: 24px 0 0 26px; }
.cloud { margin: 21px 0 0 14px; }
.spk { margin: 20px 0 0 12px; }
.mon { margin: 20px 0 0 12px; }
.bat { margin: 20px 0 0 13px; }
.kbd { margin: 20px 0 0 14px; }
.clock { width: 100px; margin-left: 14px; text-align: center; font-size: 17px; line-height: 28px; padding-top: 3px; white-space: nowrap; }
.date { letter-spacing: .35px; }
.notif { position: relative; width: 40px; margin: 18px 0 0 25px; }
.notif i { position: absolute; left: 9px; top: 11px; width: 28px; height: 26px; border: 1px solid #9aa0a3; border-radius: 50%; background: #2b3438; text-align: center; font-size: 16px; line-height: 24px; font-weight: 600; }
.peek { width: 1px; margin-left: 14px; background: #8c979b; }
```
